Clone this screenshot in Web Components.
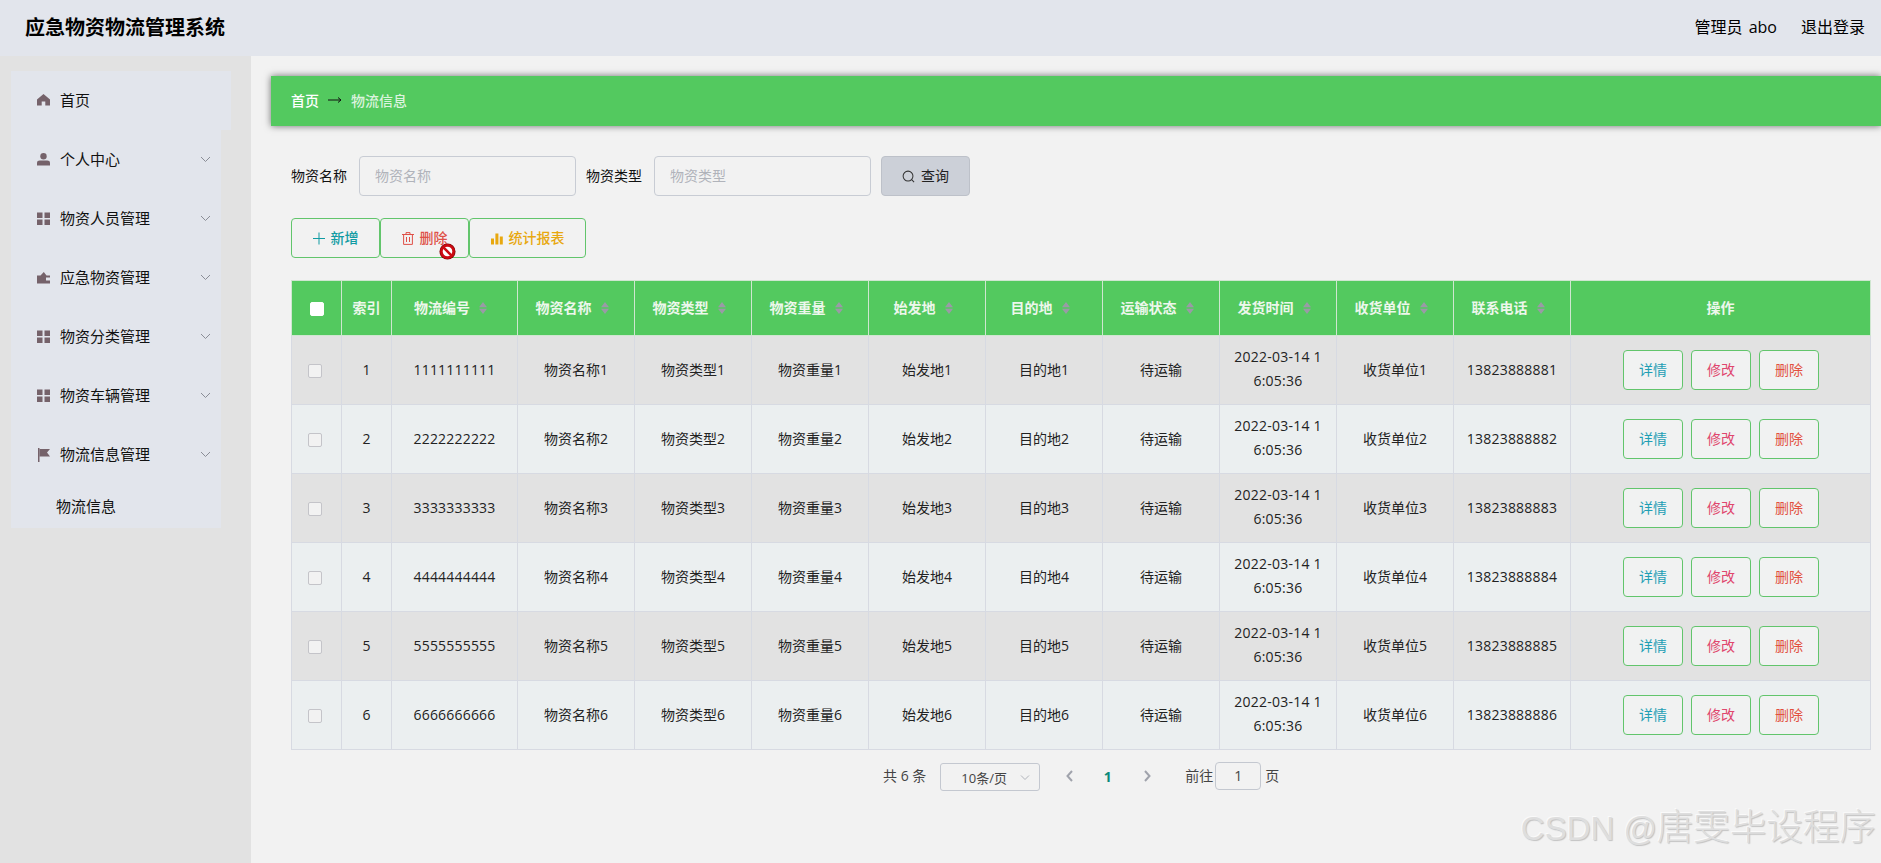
<!DOCTYPE html>
<html lang="zh"><head><meta charset="utf-8"><title>应急物资物流管理系统</title>
<style>
html,body{margin:0;height:100%;overflow:hidden;background:#f2f2f2}
body{font-family:"Open Sans","Noto Sans CJK SC",sans-serif;font-size:14px;color:#333}
</style></head><body>
<app-shell>
  <app-header slot="header"></app-header>
  <side-menu slot="side">
    <menu-item icon="home" first>首页</menu-item>
    <menu-item icon="user" arrow>个人中心</menu-item>
    <menu-item icon="grid" arrow>物资人员管理</menu-item>
    <menu-item icon="wallet" arrow>应急物资管理</menu-item>
    <menu-item icon="grid" arrow>物资分类管理</menu-item>
    <menu-item icon="grid" arrow>物资车辆管理</menu-item>
    <menu-item icon="flag" arrow>物流信息管理</menu-item>
    <menu-item sub>物流信息</menu-item>
  </side-menu>
  <crumb-bar slot="main"></crumb-bar>
  <search-bar slot="main"></search-bar>
  <tool-bar slot="main"></tool-bar>
  <data-table slot="main"></data-table>
  <page-bar slot="main"></page-bar>
</app-shell>
<script>
const ICONS={
 home:'<path d="M6.5 0 0 5.6V11.5H4.7V7.6H8.3V11.5H13V5.6Z"/>',
 user:'<circle cx="6.5" cy="3.2" r="3.2"/><path d="M0 12.5V9.8C0 8.2 1.2 7.4 2.8 7.4H10.2C11.8 7.4 13 8.2 13 9.8V12.5Z"/>',
 grid:'<rect x="0" y="0.5" width="5.5" height="5.5"/><rect x="7.5" y="0.5" width="5.5" height="5.5"/><rect x="0" y="7.5" width="5.5" height="5.5"/><rect x="7.5" y="7.5" width="5.5" height="5.5"/>',
 wallet:'<path d="M0 4.5H3.5L6.8 1 9.5 4.5H13V6.5H9V9.5H13V12.5H0Z"/>',
 flag:'<rect x="1" y="0" width="1.5" height="14"/><path d="M2.5 1H13L10 4.5 13 8.5H2.5Z"/>'
};
function def(name,html){
  customElements.define(name,class extends HTMLElement{
    connectedCallback(){
      if(this.shadowRoot)return;
      this.attachShadow({mode:'open'}).innerHTML=typeof html==='function'?html(this):html;
    }
  });
}
def('app-shell',`<style>
:host{display:grid;grid-template-columns:251px 1fr;grid-template-rows:56px 807px;width:1881px;height:863px;position:relative;overflow:hidden}
.h{grid-column:1/3}
.s{background:#e2e2e2;padding:15px 0 0 11px;box-sizing:border-box}
.m{background:#f2f2f2;padding:20px 0 0 20px;box-sizing:border-box;min-width:0}
.wm{position:absolute;right:5px;bottom:12px;color:#dedede;white-space:nowrap;line-height:44px;text-shadow:1px 1px 1px #c2c2c2,-1px -1px 0 #fafafa;font-family:"Liberation Sans","Noto Sans CJK SC",sans-serif;font-size:33px}
.wm b{font-weight:300;font-size:36.5px;font-family:"Noto Sans CJK SC",sans-serif}
</style><div class="h"><slot name="header"></slot></div><div class="s"><slot name="side"></slot></div><div class="m"><slot name="main"></slot></div>
<div class="wm">CSDN @<b>唐雯毕设程序</b></div>`);
def('app-header',`<style>
:host{display:flex;align-items:center;justify-content:space-between;height:56px;background:#e2e5ec;padding:0 16px 4px 25px;box-sizing:border-box;color:#000}
.t{font-size:20px;font-weight:700;font-family:"Noto Sans CJK SC",sans-serif}
.r{display:flex;gap:24px;font-size:16px}
.u{word-spacing:2px}
</style><div class="t">应急物资物流管理系统</div><div class="r"><span class="u">管理员 abo</span><span>退出登录</span></div>`);
def('side-menu',`<style>:host{display:block;width:210px;background:#e2e5ec;height:457px}</style><slot></slot>`);
def('menu-item',el=>{
  const sub=el.hasAttribute('sub'),first=el.hasAttribute('first'),ic=el.getAttribute('icon');
  return `<style>
:host{display:flex;align-items:center;height:${sub?44:59}px;box-sizing:border-box;background:#e2e5ec;color:#111;font-size:15px;padding-left:${sub?45:26}px;width:${first?220:210}px;position:relative}
svg.i{width:13px;height:14px;fill:#75626a;margin-right:10px;flex:none}
svg.a{position:absolute;left:189px;top:26px;width:11px;height:7px;fill:none;stroke:#8a8d96;stroke-width:1}
.t{margin-bottom:2px}
</style>${ic?`<svg class="i" viewBox="0 0 13 14">${ICONS[ic]}</svg>`:''}<span class="t"><slot></slot></span>${el.hasAttribute('arrow')?'<svg class="a" viewBox="0 0 11 7"><path d="M1 1 5.5 5.5 10 1"/></svg>':''}`;
});
def('crumb-bar',`<style>
:host{display:flex;align-items:center;height:50px;box-sizing:border-box;background:#53c95f;box-shadow:0 0 7px rgba(0,0,0,.55);padding:0 0 2px 20px;font-size:14px;color:#fff;font-weight:500;font-family:"Noto Sans CJK SC",sans-serif}
.a{color:#000;margin:0 9px;font-weight:400;width:14px;display:flex}
.l{color:#dbf3de}
svg{width:14px;height:8px;stroke:#111;fill:none}
</style><span>首页</span><span class="a"><svg viewBox="0 0 14 8"><path d="M0 4H13M10 1.5 13 4 10 6.5"/></svg></span><span class="l">物流信息</span>`);
def('search-bar',`<style>
:host{display:flex;align-items:center;height:40px;margin:30px 0 0 20px;color:#111;font-size:14px}
.lb{margin-bottom:2px}
.f{width:217px;height:40px;box-sizing:border-box;border:1px solid #c8ccd4;border-radius:4px;padding-left:15px;line-height:37px;color:#b0b3ba;margin:0 10px 0 12px}
button{all:unset;box-sizing:border-box;width:89px;height:40px;background:#ccd0d8;border:1px solid #bdc1c9;border-radius:4px;display:flex;align-items:center;justify-content:center;gap:6px;color:#222;font-size:14px}
svg{width:13px;height:13px;fill:none;stroke:#333;stroke-width:1.1}
</style><span class="lb">物资名称</span><div class="f">物资名称</div><span class="lb">物资类型</span><div class="f">物资类型</div><button><svg viewBox="0 0 14 14"><circle cx="6.5" cy="6.5" r="5.3"/><path d="M10.4 10.4 13 13"/></svg><span class="lb">查询</span></button>`);
def('tool-bar',`<style>
:host{display:flex;height:40px;margin:22px 0 0 20px;position:relative;font-size:14px}
.b{box-sizing:border-box;height:40px;border:1px solid #62c56c;border-radius:4px;display:flex;align-items:center;justify-content:center;gap:6px;font-weight:500;font-family:"Noto Sans CJK SC",sans-serif}
.b span{margin-bottom:2px}
svg.i{width:12px;height:13px;flex:none}
.no{position:absolute;left:148px;top:25px;width:17px;height:17px}
</style>
<div class="b" style="width:89px;color:#109ba3"><svg class="i" viewBox="0 0 12 12" fill="none" stroke="#109ba3"><path d="M6 0V12M0 6H12"/></svg><span>新增</span></div>
<div class="b" style="width:89px;color:#df5148"><svg class="i" viewBox="0 0 12 13" fill="none" stroke="#df5148"><path d="M0 2.5H12M4 2.5V.6H8V2.5M1.6 2.5V12.4H10.4V2.5M4.5 5V10M7.5 5V10"/></svg><span>删除</span></div>
<div class="b" style="width:117px;color:#e8a80f"><svg class="i" viewBox="0 0 12 12" fill="#e8a80f"><rect y="6" width="3" height="6"/><rect x="4.4" y="1" width="3" height="11"/><rect x="8.8" y="4" width="3" height="8"/></svg><span>统计报表</span></div>
<svg class="no" viewBox="0 0 17 17"><circle cx="8.5" cy="8.5" r="8" fill="#700"/><circle cx="8.5" cy="8.5" r="6.1" fill="#fff" stroke="#cc0a12" stroke-width="2.6"/><path d="M4.2 4.2 12.8 12.8" stroke="#cc0a12" stroke-width="2.6"/></svg>`);
def('data-table',()=>{
 const heads=['物流编号','物资名称','物资类型','物资重量','始发地','目的地','运输状态','发货时间','收货单位','联系电话'];
 const caret='<svg class="c" viewBox="0 0 8 12"><path d="M4 0 8 5.2H0ZM4 12 8 6.8H0Z"/></svg>';
 let rows='';
 for(let i=1;i<=6;i++){
  const d=String(i).repeat(10);
  rows+=`<tr><td><span class="cb"></span></td><td>${i}</td><td class="num">${d}</td><td>物资名称${i}</td><td>物资类型${i}</td><td>物资重量${i}</td><td>始发地${i}</td><td>目的地${i}</td><td>待运输</td><td class="dt">2022-03-14 1<br>6:05:36</td><td>收货单位${i}</td><td class="num">1382388888${i}</td><td><div class="ops"><span style="color:#1f9fb5">详情</span><span style="color:#e0476e">修改</span><span style="color:#e2503f">删除</span></div></td></tr>`;
 }
 return `<style>
:host{display:block;margin:22px 10px 0 20px;font-size:14px;color:#222}
table{border-collapse:separate;border-spacing:0;table-layout:fixed;width:1580px}
th{height:56px;box-sizing:border-box;background:#53c95f;color:#edf7ec;font-weight:700;font-size:14px;font-family:"Noto Sans CJK SC",sans-serif;border-right:1px solid #cfe6d0;border-bottom:1px solid #cfe6d0;border-top:1px solid #cfe6d0;padding:0 0 3px;text-align:center}
th:first-child{border-left:1px solid #cfe6d0}
th.s{padding-right:8px}
td{height:69px;box-sizing:border-box;border-right:1px solid #d7dae2;border-bottom:1px solid #d7dae2;padding:0 0 2px;text-align:center;background:#ebeff0}
td:first-child{border-left:1px solid #d7dae2}
tr:nth-child(odd) td{background:#e2e2e2}
.num{letter-spacing:.2px}
.dt{line-height:24px;word-break:break-all;letter-spacing:.25px}
.c{width:8px;height:12px;fill:#9a9aa6;margin-left:9px;vertical-align:-1px}
.cb{display:inline-block;width:14px;height:14px;box-sizing:border-box;border:1px solid #c4c4c9;border-radius:2px;background:#f2f2f2;vertical-align:middle;margin-right:3px}
th .cb{background:#fff;border-color:#fff;margin:0 0 0 1px}
.ops{display:flex;justify-content:center;gap:8px;padding-left:1px;margin-top:2px}
.ops span{box-sizing:border-box;width:60px;height:40px;border:1px solid #62c56c;border-radius:4px;line-height:38px;background:#f1f2f2}
</style><table><colgroup><col style="width:51px"><col style="width:50px"><col style="width:126px">${'<col style="width:117px">'.repeat(9)}<col></colgroup>
<thead><tr><th><span class="cb"></span></th><th>索引</th>${heads.map(h=>`<th class="s">${h}${caret}</th>`).join('')}<th>操作</th></tr></thead><tbody>${rows}</tbody></table>`;
});
def('page-bar',`<style>
:host{display:flex;align-items:center;height:30px;margin:11px 0 0 612px;font-size:14px;color:#444}
.tx{margin-bottom:2px}
.sel{box-sizing:border-box;width:100px;height:28px;border:1px solid #c4c8d0;border-radius:3px;margin:2px 0 0 14px;display:flex;align-items:center;padding-left:20px;position:relative;font-size:13px}
.sel svg{position:absolute;right:9px;top:11px;width:10px;height:6px;fill:none;stroke:#b0b3ba}
.n{width:39px;text-align:center;font-weight:700;color:#0b8a7a;font-size:14px}
.p{width:10px;height:12px;fill:none;stroke:#a0a3ac;stroke-width:2}
.in{box-sizing:border-box;width:46px;height:28px;border:1px solid #c4c8d0;border-radius:4px;text-align:center;line-height:26px;margin:0 4px 0 2px}
</style><span class="tx">共 6 条</span><span class="sel">10条/页<svg viewBox="0 0 10 6"><path d="M1 .5 5 4.5 9 .5"/></svg></span>
<svg class="p" style="margin-left:25px" viewBox="0 0 10 12"><path d="M7 1 2.5 6 7 11"/></svg><span class="n" style="margin:0 6px 0 13px">1</span><svg class="p" style="margin:0 33px 0 9px" viewBox="0 0 10 12"><path d="M3 1 7.5 6 3 11"/></svg>
<span class="tx">前往</span><span class="in">1</span><span class="tx">页</span>`);
</script>
</body></html>
